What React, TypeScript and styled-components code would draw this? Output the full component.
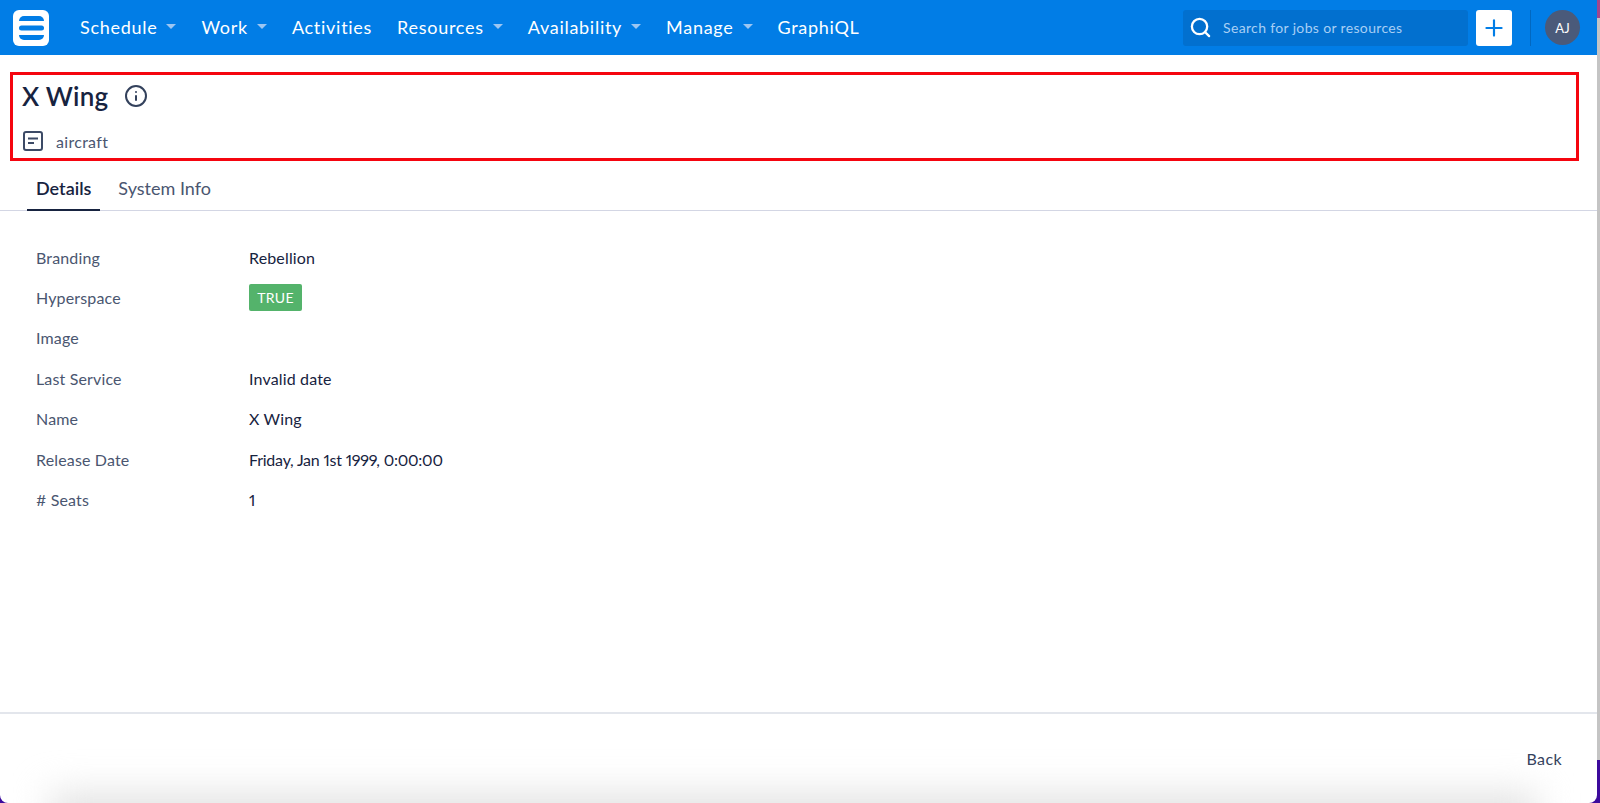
import React from 'react';
import styled, { createGlobalStyle } from 'styled-components';
import { Info, Search, Plus } from 'lucide-react';

const NAV_ITEMS = [
  { label: 'Schedule', caret: true },
  { label: 'Work', caret: true },
  { label: 'Activities', caret: false },
  { label: 'Resources', caret: true },
  { label: 'Availability', caret: true },
  { label: 'Manage', caret: true },
  { label: 'GraphiQL', caret: false },
];

const DETAILS = [
  { label: 'Branding', value: 'Rebellion' },
  { label: 'Hyperspace', badge: 'TRUE' },
  { label: 'Image', value: '' },
  { label: 'Last Service', value: 'Invalid date' },
  { label: 'Name', value: 'X Wing' },
  { label: 'Release Date', value: 'Friday, Jan 1st 1999, 0:00:00', tight: true },
  { label: '# Seats', value: '1' },
];

export default function App() {
  return (
    <>
      <GlobalStyle />
      <Page>
        <Window>
          <TopBar>
            <Logo>
              <svg width="25" height="24" viewBox="0 0 25 24" fill="#017de6">
                <path d="M5 0h15a5 5 0 0 1 5 5H0a5 5 0 0 1 5-5z" />
                <rect x="0" y="9.5" width="25" height="5" rx="2.5" />
                <path d="M0 19h25a5 5 0 0 1-5 5H5a5 5 0 0 1-5-5z" />
              </svg>
            </Logo>
            <Nav>
              {NAV_ITEMS.map((item) => (
                <NavItem key={item.label}>
                  {item.label}
                  {item.caret && <Caret />}
                </NavItem>
              ))}
            </Nav>
            <SearchBox>
              <Search size={23} color="#fff" strokeWidth={2.4} />
              <span>Search for jobs or resources</span>
            </SearchBox>
            <AddButton>
              <Plus size={26} color="#017de6" strokeWidth={2} />
            </AddButton>
            <Divider />
            <Avatar>AJ</Avatar>
          </TopBar>

          <Header>
            <TitleRow>
              <Title>X Wing</Title>
              <Info size={24} color="#33415c" strokeWidth={2} />
            </TitleRow>
            <TypeRow>
              <svg width="22" height="22" viewBox="0 0 22 22" fill="none" stroke="#3c4a66" strokeWidth="2">
                <rect x="2" y="2" width="18" height="18" rx="2" />
                <path d="M6 8.5h10M6 13h6" />
              </svg>
              <span>aircraft</span>
            </TypeRow>
          </Header>

          <Tabs>
            <Tab $active>Details</Tab>
            <Tab>System Info</Tab>
          </Tabs>

          <Fields>
            {DETAILS.map((row) => (
              <FieldRow key={row.label}>
                <FieldLabel>{row.label}</FieldLabel>
                {row.badge ? (
                  <Badge>{row.badge}</Badge>
                ) : (
                  <FieldValue $tight={row.tight}>{row.value}</FieldValue>
                )}
              </FieldRow>
            ))}
          </Fields>

          <Footer>
            <BackButton>Back</BackButton>
          </Footer>

          <BottomShade />
        </Window>
      </Page>
    </>
  );
}

const GlobalStyle = createGlobalStyle`
  html, body {
    margin: 0;
    padding: 0;
    height: 100%;
    overflow: hidden;
  }
  body {
    font-family: 'Lato', 'Open Sans', sans-serif;
    font-variant-numeric: proportional-nums;
  }
`;

const Page = styled.div`
  width: 1600px;
  height: 803px;
  display: flex;
  background: linear-gradient(to bottom, #a2468c 0, #a2468c 18px, #c4c4c4 18px, #c4c4c4 760px, #3c0a9c 760px);
`;

const Window = styled.div`
  position: relative;
  width: 1597px;
  height: 803px;
  display: flex;
  flex-direction: column;
  background: #fff;
  border-bottom-left-radius: 8px;
  border-bottom-right-radius: 8px;
  overflow: hidden;
`;

const BottomShade = styled.div`
  position: absolute;
  left: 50px;
  right: 60px;
  bottom: -40px;
  height: 50px;
  background: #e2e2e2;
  filter: blur(18px);
`;

const TopBar = styled.header`
  height: 55px;
  flex-shrink: 0;
  display: flex;
  align-items: center;
  padding: 0 17px 0 13px;
  background: #017de6;
`;

const Logo = styled.div`
  width: 36px;
  height: 36px;
  display: flex;
  align-items: center;
  justify-content: center;
  border-radius: 6px;
  background: #fff;
`;

const Nav = styled.nav`
  flex: 1;
  display: flex;
  align-items: center;
  gap: 25px;
  margin: 0 0 2px 31px;
`;

const NavItem = styled.div`
  display: flex;
  align-items: center;
  gap: 9px;
  color: #fff;
  font-size: 18px;
  letter-spacing: 0.72px;
`;

const Caret = styled.span`
  width: 0;
  height: 0;
  border-left: 5px solid transparent;
  border-right: 5px solid transparent;
  border-top: 5px solid #9cc6f2;
`;

const SearchBox = styled.div`
  width: 285px;
  height: 36px;
  display: flex;
  align-items: center;
  gap: 11px;
  padding-left: 6px;
  box-sizing: border-box;
  border-radius: 3px;
  background: #0270cf;
  color: #a8cff5;
  font-size: 14px;
  letter-spacing: 0.35px;
`;

const AddButton = styled.div`
  width: 36px;
  height: 36px;
  margin-left: 8px;
  display: flex;
  align-items: center;
  justify-content: center;
  border-radius: 3px;
  background: #fff;
`;

const Divider = styled.div`
  width: 1px;
  height: 36px;
  margin: 0 14px 0 18px;
  background: #0268c0;
`;

const Avatar = styled.div`
  width: 35px;
  height: 35px;
  display: flex;
  align-items: center;
  justify-content: center;
  border-radius: 50%;
  background: #4a5a7a;
  color: #fff;
  font-size: 13px;
`;

const Header = styled.section`
  height: 89px;
  flex-shrink: 0;
  margin: 17px 18px 0 10px;
  padding: 6px 0 0 9px;
  box-sizing: border-box;
  border: 3px solid #f5050f;
`;

const TitleRow = styled.div`
  display: flex;
  align-items: center;
  gap: 16px;
  height: 30px;
`;

const Title = styled.h1`
  margin: 0;
  color: #172340;
  font-size: 26px;
  font-weight: 600;
  letter-spacing: 0.2px;
`;

const TypeRow = styled.div`
  display: flex;
  align-items: center;
  gap: 12px;
  margin-top: 19px;
  color: #4a5670;
  font-size: 16px;
  letter-spacing: 0.3px;
`;

const Tabs = styled.div`
  height: 50px;
  flex-shrink: 0;
  display: flex;
  align-items: stretch;
  gap: 9px;
  padding-left: 27px;
  box-sizing: border-box;
  border-bottom: 1px solid #d3d6e4;
`;

const Tab = styled.div<{ $active?: boolean }>`
  display: flex;
  align-items: center;
  padding: 6px 9px 0;
  margin-bottom: -1px;
  color: ${(props) => (props.$active ? '#172340' : '#4a5670')};
  font-size: 18px;
  font-weight: ${(props) => (props.$active ? 600 : 400)};
  border-bottom: 2px solid ${(props) => (props.$active ? '#172340' : 'transparent')};
`;

const Fields = styled.div`
  flex: 1;
  display: flex;
  flex-direction: column;
  padding: 26px 0 0 36px;
`;

const FieldRow = styled.div`
  height: 40.4px;
  flex-shrink: 0;
  display: flex;
  align-items: center;
`;

const FieldLabel = styled.div`
  width: 213px;
  color: #4a5670;
  font-size: 16px;
  letter-spacing: 0.15px;
`;

const FieldValue = styled.div<{ $tight?: boolean }>`
  color: #172340;
  font-size: 16px;
  letter-spacing: ${(props) => (props.$tight ? '-0.22px' : '0.15px')};
`;

const Badge = styled.span`
  display: flex;
  align-items: center;
  justify-content: center;
  width: 53px;
  height: 27px;
  border-radius: 2px;
  background: #54b36b;
  color: #fff;
  font-size: 14px;
  letter-spacing: 0.3px;
`;

const Footer = styled.footer`
  height: 91px;
  flex-shrink: 0;
  display: flex;
  justify-content: flex-end;
  padding: 35px 35px 0 0;
  box-sizing: border-box;
  border-top: 2px solid #e3e6ec;
`;

const BackButton = styled.div`
  color: #33415c;
  font-size: 16px;
  letter-spacing: 0.4px;
`;
